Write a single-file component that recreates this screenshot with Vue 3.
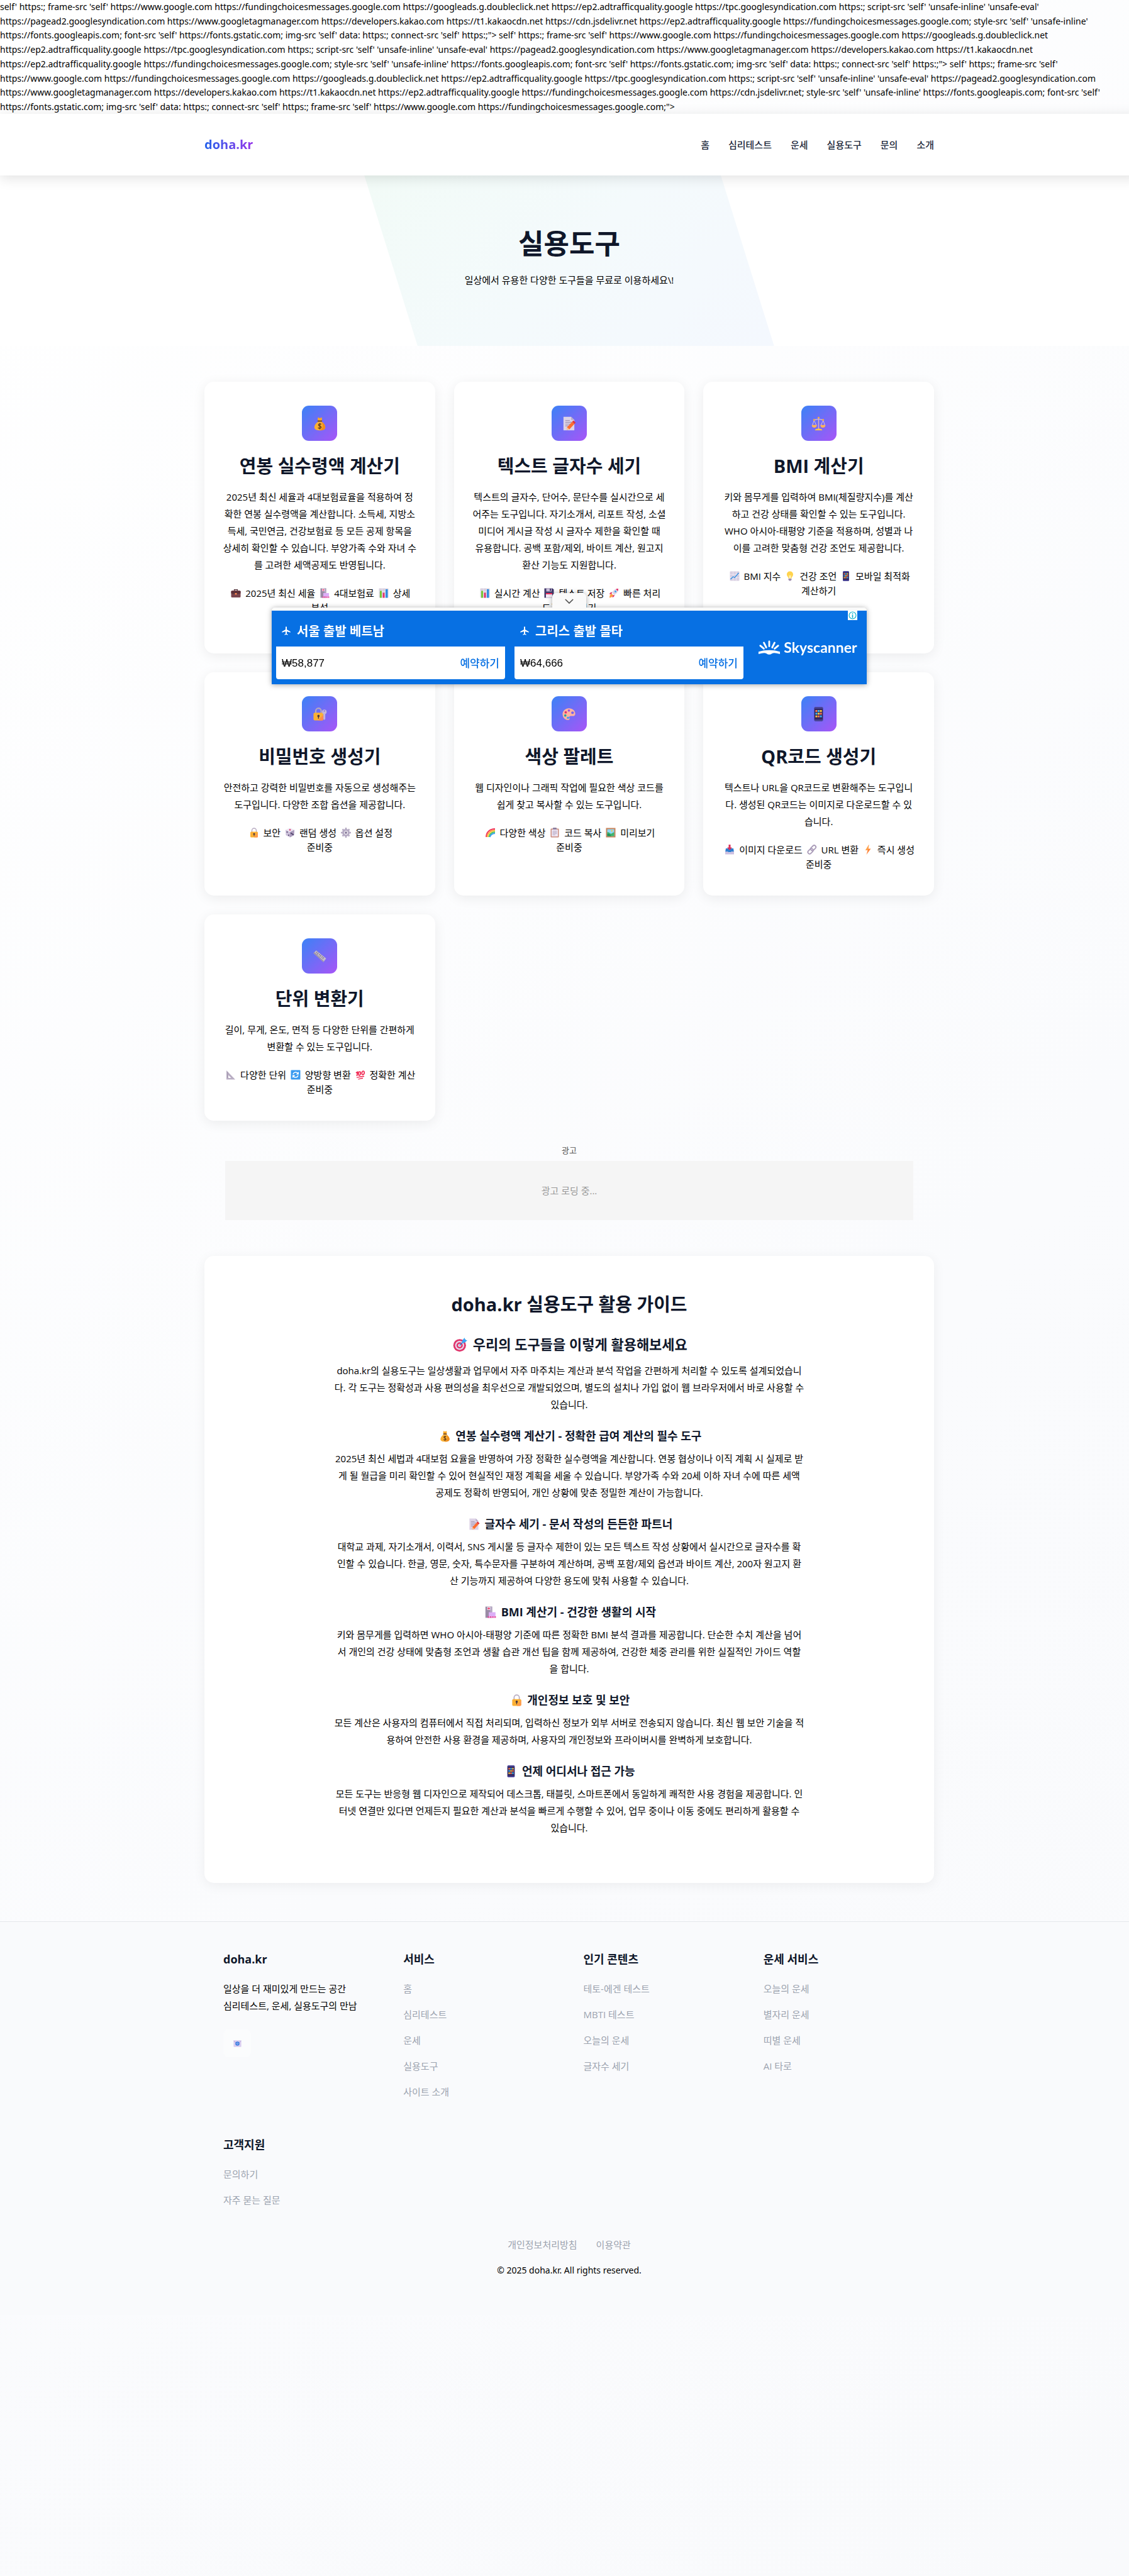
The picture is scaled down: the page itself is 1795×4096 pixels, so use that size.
<script setup>
import { h } from 'vue'

const icons = {
  money: '<path d="M12 2l4 2 4-2 1 5-2 3h-6l-2-3z" fill="#f9a825"/><rect x="11" y="9" width="10" height="3" rx="1" fill="#7a4a1d"/><path d="M12 12h8c5 3 8 8 8 12 0 5-4 7-12 7S4 29 4 24c0-4 3-9 8-12z" fill="#fbb034"/><path d="M20 12c5 3 8 8 8 12 0 5-4 7-12 7 6-3 8-12 4-19z" fill="#f08c1c"/><path d="M19 18c-1-2-6-2-6 1s6 2 6 5-5 3-7 1M16 15v14" fill="none" stroke="#6b3f18" stroke-width="2"/>',
  memo: '<path d="M4 1h17l7 7v23H4z" fill="#ddd3e6"/><path d="M21 1l7 7h-7z" fill="#b9a9c8"/><path d="M8 9h10M8 13h14M8 17h12M8 21h7" stroke="#9d8fae" stroke-width="1.6"/><path d="M11 30l1-6 11-12 5 5-11 12z" fill="#ff6d2e"/><path d="M23 12l3-3 5 5-3 3z" fill="#e0353c"/><path d="M11 30l1-6 5 5z" fill="#f7c9a0"/>',
  scales: '<path d="M15 2h2v26h-2z" fill="#d7b5c0"/><circle cx="16" cy="3" r="2" fill="#fbb034"/><path d="M6 8l10-2 10 2" fill="none" stroke="#c9b1d9" stroke-width="2"/><path d="M6 9L2 20M6 9l5 11M26 9l-5 11M26 9l4 11" stroke="#d9c4e8" stroke-width="1.3"/><circle cx="6" cy="8" r="2" fill="#fbb034"/><circle cx="26" cy="8" r="2" fill="#fbb034"/><path d="M1 19h11c0 4-2 6-5.500 6S1 23 1 19zM20 19h11c0 4-2 6-5.500 6S20 23 20 19z" fill="#fdb35a"/><path d="M8 31c0-3 3-4 8-4s8 1 8 4z" fill="#ffc83d"/>',
  lockkey: '<path d="M7 14V9a6 6 0 0 1 12 0v5" fill="none" stroke="#b7a8bd" stroke-width="3"/><rect x="2" y="13" width="22" height="17" rx="3" fill="#fbb034"/><path d="M12 30l12-13v10a3 3 0 0 1-3 3z" fill="#ff8a50"/><circle cx="13" cy="20" r="2.500" fill="#4a3540"/><path d="M12 20h2v6h-2z" fill="#4a3540"/><circle cx="26" cy="11" r="5" fill="#c3b5da"/><circle cx="26" cy="9" r="1.500" fill="#7a65f0"/><path d="M24 14h4v13l-2 2-2-2z" fill="#c3b5da"/>',
  palette: '<path d="M16 3C8 3 2 9 2 16s5 13 12 13c4 0 4-3 3-5s0-4 3-4c4 0 10 2 10-5C30 8 24 3 16 3z" fill="#ffb3a0"/><circle cx="9" cy="12" r="2.600" fill="#e0356c"/><circle cx="16" cy="8" r="2.600" fill="#a04de0"/><circle cx="8" cy="19" r="2.600" fill="#20a6a0"/><circle cx="14" cy="24" r="2.600" fill="#3aa0f0"/><circle cx="24" cy="13" r="3" fill="#7661f2"/>',
  phone: '<rect x="6" y="0" width="20" height="32" rx="3" fill="#4a4596"/><rect x="7" y="4" width="18" height="24" fill="#33265c"/><path d="M9 7h4v4H9zM19 13h4v4h-4zM14 19h4v4h-4z" fill="#ff7a4a"/><path d="M14 7h4v4h-4zM9 13h4v4H9zM19 19h4v4h-4z" fill="#38b8f2"/><path d="M19 7h4v4h-4zM14 13h4v4h-4zM9 19h4v4H9z" fill="#ffc83d"/>',
  ruler: '<path d="M2 9l6-6 22 18-6 8z" fill="#c4bccb"/><path d="M2 9l22 20 1-2L4 7z" fill="#9d93a6"/><path d="M10 6l-2 3M13 8l-3 4M16 11l-2 3M19 13l-3 4M22 16l-2 3M25 18l-3 4" stroke="#7a6f86" stroke-width="1.400"/>',
  briefcase: '<path d="M11 9V5h10v4" fill="none" stroke="#4d2a32" stroke-width="2.500"/><rect x="1" y="8" width="30" height="22" rx="3" fill="#7a444c"/><path d="M1 10h30v7l-15 3-15-3z" fill="#5c3038"/><rect x="13" y="16" width="6" height="5" rx="1" fill="#ff8a50"/>',
  hospital: '<path d="M3 1h18v30H3z" fill="#9a8ba6"/><path d="M15 1h6v14h-6z" fill="#b6a8c4"/><path d="M8 2h8v8H8z" fill="#f5e6f4"/><path d="M12 3v6M9 6h6" stroke="#f02f5c" stroke-width="2"/><path d="M12 16h18v11H12z" fill="#dcaef7"/><path d="M9 27h22v4H9z" fill="#e3499f"/><path d="M14 27v4M20 27v4M26 27v4" stroke="#f7c6ea" stroke-width="2"/>',
  bars: '<rect x="1" y="1" width="30" height="30" rx="2" fill="#d8d0df"/><path d="M1 11h30M1 21h30M11 1v30M21 1v30" stroke="#f3eef7" stroke-width="1"/><path d="M4 9h6v22H4z" fill="#74c837"/><path d="M13 15h6v16h-6z" fill="#e0356c"/><path d="M22 4h7v27h-7z" fill="#2f8ee0"/>',
  floppy: '<path d="M1 1h26l4 4v26H1z" fill="#433b6b"/><path d="M7 1h17v10H7z" fill="#c6bbd6"/><path d="M18 2h4v7h-4z" fill="#433b6b"/><path d="M6 16h20v15H6z" fill="#f3eaf5"/><path d="M6 16h20v4H6z" fill="#f02f5c"/>',
  rocket: '<path d="M30 2c-9 0-15 4-20 12l7 8c9-5 13-11 13-20z" fill="#dcd3e6"/><path d="M30 2c-3 0-6 .500-8 1.500l6.500 6.500c1-2 1.500-5 1.500-8z" fill="#e0356c"/><circle cx="21" cy="11" r="3" fill="#3aa0f0"/><path d="M10 13c-5 0-7 3-8 7l7-1zM18 22c0 5-3 7-7 8l1-7z" fill="#e0356c"/><path d="M9 18c-5 2-7 6-7 13 6-1 10-3 12-8z" fill="#ff9b45"/>',
  trend: '<rect x="1" y="1" width="30" height="30" rx="2" fill="#d8cfe2"/><path d="M1 11h30M1 21h30M11 1v30M21 1v30" stroke="#f5f0fa" stroke-width="1.200"/><path d="M3 26l8-8 5 3L29 6" fill="none" stroke="#2f8ee0" stroke-width="2.600"/>',
  bulb: '<path d="M16 1c-6 0-10 4-10 10 0 5 4 7 5 12h10c1-5 5-7 5-12 0-6-4-10-10-10z" fill="#ffd34d"/><path d="M13 12l3 3 3-3v11h-6z" fill="#fff1b3"/><path d="M11 24h10v4l-3 3h-4l-3-3z" fill="#a08fae"/>',
  lock: '<path d="M9 15V9a7 7 0 0 1 14 0v6" fill="none" stroke="#b9adc2" stroke-width="3"/><rect x="4" y="13" width="24" height="18" rx="3" fill="#fbb034"/><path d="M16 31L28 15v13a3 3 0 0 1-3 3z" fill="#ff9a4d"/><circle cx="16" cy="20" r="3" fill="#4a3540"/><path d="M15 21h2v6h-2z" fill="#4a3540"/>',
  dice: '<path d="M16 1l14 6-14 7L2 7z" fill="#ece5f2"/><path d="M2 7l14 7v17L3 24z" fill="#cbbfd8"/><path d="M30 7l-14 7v17l13-7z" fill="#a99abb"/><circle cx="16" cy="7" r="2.500" fill="#e0356c"/><circle cx="7" cy="14" r="2" fill="#483a63"/><circle cx="12" cy="24" r="2" fill="#483a63"/><circle cx="20" cy="18" r="2" fill="#483a63"/><circle cx="26" cy="22" r="2" fill="#483a63"/><circle cx="23" cy="20" r="2" fill="#483a63"/>',
  gear: '<circle cx="16" cy="16" r="9" fill="none" stroke="#b6abc4" stroke-width="6"/><path d="M16 0v6M16 26v6M0 16h6M26 16h6M5 5l4 4M23 23l4 4M27 5l-4 4M9 23l-4 4" stroke="#b6abc4" stroke-width="5"/><circle cx="16" cy="16" r="4" fill="#8d80a0"/>',
  rainbow: '<g fill="none" stroke-width="3.600"><path d="M2 30C2 14 14 4 30 4" stroke="#f02f5c"/><path d="M5 30C5 17 16 8 30 8" stroke="#ff9b45"/><path d="M8 30C9 19 18 12 30 11" stroke="#ffd34d"/><path d="M11 30c1-9 8-15 19-16" stroke="#4bc46a"/><path d="M14 30c1-7 7-11 16-12" stroke="#3aa0f0"/></g>',
  clipboard: '<rect x="3" y="3" width="26" height="28" rx="2" fill="#c98a7d"/><path d="M6 6h20v22H6z" fill="#efe7f4"/><rect x="10" y="0" width="12" height="6" rx="2" fill="#8d80a0"/><path d="M9 11h14M9 15h14M9 19h14M9 23h9" stroke="#a497b5" stroke-width="1.600"/>',
  picture: '<rect x="1" y="1" width="30" height="30" fill="#c9835a"/><path d="M5 5h22v22H5z" fill="#8fd6f7"/><path d="M5 14c7-1 9 7 13 5s6-5 9-4v12H5z" fill="#3fb56c"/><path d="M5 19c6 0 10 3 13 8H5z" fill="#22905a"/><path d="M17 7l6 2-4 5z" fill="#ffc83d"/>',
  inbox: '<path d="M4 12h24l2 12H2z" fill="#2f7fd0"/><path d="M2 22h9c1 4 9 4 10 0h9v9H2z" fill="#cbbfe0"/><path d="M13 0h6v9h5l-8 9-8-9h5z" fill="#d92f5c"/>',
  link: '<g fill="none" stroke="#a99bb8" stroke-width="3.600"><rect x="15" y="1" width="11" height="19" rx="5.500" transform="rotate(45 20 10)"/><rect x="6" y="12" width="11" height="19" rx="5.500" transform="rotate(45 12 21)"/></g>',
  bolt: '<path d="M19 0L8 18h7l-4 14 14-19h-8z" fill="#ff8438"/><path d="M19 0L8 18h7l2-5z" fill="#ffa64d"/>',
  triangle: '<path d="M2 2l28 29H2z" fill="#b9aec4"/><path d="M8 17l9 9H8z" fill="#fff"/><path d="M4 8h3M4 12h3M4 16h3M4 20h3M4 24h3" stroke="#84788f" stroke-width="1.200"/>',
  refresh: '<rect x="1" y="1" width="30" height="30" rx="2" fill="#3a9af0"/><path d="M8 14c2-7 11-8 15-3M24 18c-2 7-11 8-15 3" fill="none" stroke="#fff" stroke-width="3"/><path d="M26 6v9h-9zM6 26v-9h9z" fill="#fff"/>',
  hundred: '<g fill="none" stroke="#f0244f" stroke-width="3.400" stroke-linecap="round"><path d="M3 9l4-2-2 12M10 16c-1-6 1-10 4-10s3 4 2 8-5 5-6 2zM21 14c-1-6 1-10 4-10s4 4 3 8-6 5-7 2z"/><path d="M5 25c8-3 15-4 22-4M10 30c5-2 9-3 13-3" stroke-width="2.600"/></g>',
  target: '<circle cx="15" cy="17" r="14" fill="#e0356c"/><circle cx="15" cy="17" r="10" fill="#e6dcef"/><circle cx="15" cy="17" r="7" fill="#e0356c"/><circle cx="15" cy="17" r="3.500" fill="#e6dcef"/><path d="M15 17L28 4" stroke="#2f7fd0" stroke-width="2"/><path d="M20 12l1-6 5-6 1 5 5 1-6 5z" fill="#3aa6f5"/>',
  mail: '<rect x="1" y="3" width="30" height="26" rx="2" fill="#d9cdf0"/><path d="M1 5l15 12L31 5" fill="none" stroke="#b3a3d6" stroke-width="2"/><circle cx="16" cy="16" r="8" fill="#3a7be0"/><circle cx="16" cy="16" r="3" fill="none" stroke="#cfe0fb" stroke-width="1.600"/>',
}

const Ico = (props) =>
  h('svg', { viewBox: '0 0 32 32', 'aria-hidden': 'true', innerHTML: icons[props.name] })
Ico.props = ['name']

const policyLines = [
  "self' https:; frame-src 'self' https://www.google.com https://fundingchoicesmessages.google.com https://googleads.g.doubleclick.net https://ep2.adtrafficquality.google https://tpc.googlesyndication.com https:; script-src 'self' 'unsafe-inline' 'unsafe-eval'",
  "https://pagead2.googlesyndication.com https://www.googletagmanager.com https://developers.kakao.com https://t1.kakaocdn.net https://cdn.jsdelivr.net https://ep2.adtrafficquality.google https://fundingchoicesmessages.google.com; style-src 'self' 'unsafe-inline'",
  "https://fonts.googleapis.com; font-src 'self' https://fonts.gstatic.com; img-src 'self' data: https:; connect-src 'self' https:;\"> self' https:; frame-src 'self' https://www.google.com https://fundingchoicesmessages.google.com https://googleads.g.doubleclick.net",
  "https://ep2.adtrafficquality.google https://tpc.googlesyndication.com https:; script-src 'self' 'unsafe-inline' 'unsafe-eval' https://pagead2.googlesyndication.com https://www.googletagmanager.com https://developers.kakao.com https://t1.kakaocdn.net",
  "https://ep2.adtrafficquality.google https://fundingchoicesmessages.google.com; style-src 'self' 'unsafe-inline' https://fonts.googleapis.com; font-src 'self' https://fonts.gstatic.com; img-src 'self' data: https:; connect-src 'self' https:;\"> self' https:; frame-src 'self'",
  "https://www.google.com https://fundingchoicesmessages.google.com https://googleads.g.doubleclick.net https://ep2.adtrafficquality.google https://tpc.googlesyndication.com https:; script-src 'self' 'unsafe-inline' 'unsafe-eval' https://pagead2.googlesyndication.com",
  "https://www.googletagmanager.com https://developers.kakao.com https://t1.kakaocdn.net https://ep2.adtrafficquality.google https://fundingchoicesmessages.google.com https://cdn.jsdelivr.net; style-src 'self' 'unsafe-inline' https://fonts.googleapis.com; font-src 'self'",
  "https://fonts.gstatic.com; img-src 'self' data: https:; connect-src 'self' https:; frame-src 'self' https://www.google.com https://fundingchoicesmessages.google.com;\">",
]

const nav = ['홈', '심리테스트', '운세', '실용도구', '문의', '소개']

const tools = [
  {
    icon: 'money', title: '연봉 실수령액 계산기', action: '계산하기',
    text: '2025년 최신 세율과 4대보험료율을 적용하여 정\n확한 연봉 실수령액을 계산합니다. 소득세, 지방소\n득세, 국민연금, 건강보험료 등 모든 공제 항목을\n상세히 확인할 수 있습니다. 부양가족 수와 자녀 수\n를 고려한 세액공제도 반영됩니다.',
    features: [['briefcase', '2025년 최신 세율'], ['hospital', '4대보험료'], ['bars', '상세\n분석']],
  },
  {
    icon: 'memo', title: '텍스트 글자수 세기', action: '도구 사용하기',
    text: '텍스트의 글자수, 단어수, 문단수를 실시간으로 세\n어주는 도구입니다. 자기소개서, 리포트 작성, 소셜\n미디어 게시글 작성 시 글자수 제한을 확인할 때\n유용합니다. 공백 포함/제외, 바이트 계산, 원고지\n환산 기능도 지원합니다.',
    features: [['bars', '실시간 계산'], ['floppy', '텍스트 저장'], ['rocket', '빠른 처리']],
  },
  {
    icon: 'scales', title: 'BMI 계산기', action: '계산하기',
    text: '키와 몸무게를 입력하여 BMI(체질량지수)를 계산\n하고 건강 상태를 확인할 수 있는 도구입니다.\nWHO 아시아-태평양 기준을 적용하며, 성별과 나\n이를 고려한 맞춤형 건강 조언도 제공합니다.',
    features: [['trend', 'BMI 지수'], ['bulb', '건강 조언'], ['phone', '모바일 최적화']],
  },
  {
    icon: 'lockkey', title: '비밀번호 생성기', action: '준비중',
    text: '안전하고 강력한 비밀번호를 자동으로 생성해주는\n도구입니다. 다양한 조합 옵션을 제공합니다.',
    features: [['lock', '보안'], ['dice', '랜덤 생성'], ['gear', '옵션 설정']],
  },
  {
    icon: 'palette', title: '색상 팔레트', action: '준비중',
    text: '웹 디자인이나 그래픽 작업에 필요한 색상 코드를\n쉽게 찾고 복사할 수 있는 도구입니다.',
    features: [['rainbow', '다양한 색상'], ['clipboard', '코드 복사'], ['picture', '미리보기']],
  },
  {
    icon: 'phone', title: 'QR코드 생성기', action: '준비중',
    text: '텍스트나 URL을 QR코드로 변환해주는 도구입니\n다. 생성된 QR코드는 이미지로 다운로드할 수 있\n습니다.',
    features: [['inbox', '이미지 다운로드'], ['link', 'URL 변환'], ['bolt', '즉시 생성']],
  },
  {
    icon: 'ruler', title: '단위 변환기', action: '준비중',
    text: '길이, 무게, 온도, 면적 등 다양한 단위를 간편하게\n변환할 수 있는 도구입니다.',
    features: [['triangle', '다양한 단위'], ['refresh', '양방향 변환'], ['hundred', '정확한 계산']],
  },
]

const deals = [
  { route: '서울 출발 베트남', price: '₩58,877' },
  { route: '그리스 출발 몰타', price: '₩64,666' },
]

const guide = [
  { icon: 'money', title: '연봉 실수령액 계산기 - 정확한 급여 계산의 필수 도구', text: '2025년 최신 세법과 4대보험 요율을 반영하여 가장 정확한 실수령액을 계산합니다. 연봉 협상이나 이직 계획 시 실제로 받\n게 될 월급을 미리 확인할 수 있어 현실적인 재정 계획을 세울 수 있습니다. 부양가족 수와 20세 이하 자녀 수에 따른 세액\n공제도 정확히 반영되어, 개인 상황에 맞춘 정밀한 계산이 가능합니다.' },
  { icon: 'memo', title: '글자수 세기 - 문서 작성의 든든한 파트너', text: '대학교 과제, 자기소개서, 이력서, SNS 게시물 등 글자수 제한이 있는 모든 텍스트 작성 상황에서 실시간으로 글자수를 확\n인할 수 있습니다. 한글, 영문, 숫자, 특수문자를 구분하여 계산하며, 공백 포함/제외 옵션과 바이트 계산, 200자 원고지 환\n산 기능까지 제공하여 다양한 용도에 맞춰 사용할 수 있습니다.' },
  { icon: 'hospital', title: 'BMI 계산기 - 건강한 생활의 시작', text: '키와 몸무게를 입력하면 WHO 아시아-태평양 기준에 따른 정확한 BMI 분석 결과를 제공합니다. 단순한 수치 계산을 넘어\n서 개인의 건강 상태에 맞춤형 조언과 생활 습관 개선 팁을 함께 제공하여, 건강한 체중 관리를 위한 실질적인 가이드 역할\n을 합니다.' },
  { icon: 'lock', title: '개인정보 보호 및 보안', text: '모든 계산은 사용자의 컴퓨터에서 직접 처리되며, 입력하신 정보가 외부 서버로 전송되지 않습니다. 최신 웹 보안 기술을 적\n용하여 안전한 사용 환경을 제공하며, 사용자의 개인정보와 프라이버시를 완벽하게 보호합니다.' },
  { icon: 'phone', title: '언제 어디서나 접근 가능', text: '모든 도구는 반응형 웹 디자인으로 제작되어 데스크톱, 태블릿, 스마트폰에서 동일하게 쾌적한 사용 경험을 제공합니다. 인\n터넷 연결만 있다면 언제든지 필요한 계산과 분석을 빠르게 수행할 수 있어, 업무 중이나 이동 중에도 편리하게 활용할 수\n있습니다.' },
]

const footerColumns = [
  { title: '서비스', links: ['홈', '심리테스트', '운세', '실용도구', '사이트 소개'] },
  { title: '인기 콘텐츠', links: ['테토-에겐 테스트', 'MBTI 테스트', '오늘의 운세', '글자수 세기'] },
  { title: '운세 서비스', links: ['오늘의 운세', '별자리 운세', '띠별 운세', 'AI 타로'] },
  { title: '고객지원', links: ['문의하기', '자주 묻는 질문'] },
]
</script>

<template>
  <div class="viewport">
    <div class="page">
      <div class="policy">
        <div v-for="line in policyLines" :key="line">{{ line }}</div>
      </div>

      <header class="header">
        <div class="container header-row">
          <a href="#" class="logo">doha.kr</a>
          <nav class="nav">
            <a v-for="item in nav" :key="item" href="#">{{ item }}</a>
          </nav>
        </div>
      </header>

      <section class="hero">
        <h1>실용도구</h1>
        <p>일상에서 유용한 다양한 도구들을 무료로 이용하세요\!</p>
      </section>

      <main class="container">
        <div class="tools">
          <article v-for="tool in tools" :key="tool.title" class="card">
            <div class="tile"><Ico :name="tool.icon" class="tile-icon" /></div>
            <h2>{{ tool.title }}</h2>
            <p class="card-text">{{ tool.text }}</p>
            <div class="features">
              <template v-for="f in tool.features" :key="f[1]"><Ico :name="f[0]" class="emoji" />{{ ' ' + f[1] + ' ' }}</template>
            </div>
            <a href="#" class="action">{{ tool.action }}</a>
          </article>
        </div>

        <div class="ad-slot">
          <div class="ad-label">광고</div>
          <div class="ad-box">광고 로딩 중...</div>
        </div>

        <section class="guide">
          <h2>doha.kr 실용도구 활용 가이드</h2>
          <h3><Ico name="target" class="emoji-lg" /> 우리의 도구들을 이렇게 활용해보세요</h3>
          <p>doha.kr의 실용도구는 일상생활과 업무에서 자주 마주치는 계산과 분석 작업을 간편하게 처리할 수 있도록 설계되었습니<br>다. 각 도구는 정확성과 사용 편의성을 최우선으로 개발되었으며, 별도의 설치나 가입 없이 웹 브라우저에서 바로 사용할 수<br>있습니다.</p>
          <template v-for="g in guide" :key="g.title">
            <h4><Ico :name="g.icon" class="emoji-md" />{{ ' ' + g.title }}</h4>
            <p>{{ g.text }}</p>
          </template>
        </section>
      </main>

      <footer class="footer">
        <div class="footer-grid">
          <div>
            <h3>doha.kr</h3>
            <p class="about">일상을 더 재미있게 만드는 공간<br>심리테스트, 운세, 실용도구의 만남</p>
            <a href="#" class="mail" aria-label="이메일"><Ico name="mail" class="mail-icon" /></a>
          </div>
          <div v-for="col in footerColumns" :key="col.title">
            <h3>{{ col.title }}</h3>
            <ul>
              <li v-for="link in col.links" :key="link"><a href="#">{{ link }}</a></li>
            </ul>
          </div>
        </div>
        <div class="legal">
          <a href="#">개인정보처리방침</a>
          <a href="#">이용약관</a>
        </div>
        <p class="copyright">© 2025 doha.kr. All rights reserved.</p>
      </footer>

      <aside class="anchor-ad">
        <button class="collapse" type="button" aria-label="광고 접기">
          <svg viewBox="0 0 16 10"><path d="M1 1l7 7 7-7" fill="none" stroke="#555" stroke-width="2" /></svg>
        </button>
        <div class="strip"></div>
        <div class="banner">
          <div v-for="deal in deals" :key="deal.route" class="deal">
            <div class="route">
              <svg viewBox="0 0 24 24"><path d="M22 16v-2l-8.500-5V3.500a1.500 1.500 0 0 0-3 0V9L2 14v2l8.500-2.500V19L8 20.500V22l4-1 4 1v-1.500L13.500 19v-5.500z" fill="#fff" /></svg>
              <span>{{ deal.route }}</span>
            </div>
            <div class="offer">
              <span class="price">{{ deal.price }}</span>
              <a href="#">예약하기</a>
            </div>
          </div>
          <div class="brand">
            <svg viewBox="0 0 38 24">
              <path d="M1 19q18-5 36 0v4q-10-3-13-1t-5 2-5-2-13 1z" fill="#fff" />
              <g stroke="#fff" stroke-width="3" stroke-linecap="round"><path d="M19 2v8M10 4l4 8M28 4l-4 8M4 9l6 5M34 9l-6 5" /></g>
            </svg>
            <span>Skyscanner</span>
          </div>
          <button class="info" type="button" aria-label="광고 정보">
            <svg viewBox="0 0 15 15"><circle cx="7.500" cy="7.500" r="5.500" fill="none" stroke="#00aecd" stroke-width="1.200" /><path d="M7.500 6.500v5M7.500 4v1.500" stroke="#00aecd" stroke-width="1.600" /></svg>
          </button>
        </div>
      </aside>
    </div>
  </div>
</template>

<style>
body {
  background: linear-gradient(135deg, #ffffff 0%, #fafbfd 60%, #f9fafc 100%);
}
</style>

<style scoped>
.viewport {
  overflow: hidden;
  min-height: 100vh;
  font-family: "Open Sans", "Noto Sans CJK KR", sans-serif;
  font-size: 15px;
  line-height: 23px;
  color: #000;
}
.page {
  position: relative;
  width: calc(100% + 15px);
}
a {
  color: inherit;
  text-decoration: none;
}
h1, h2, h3, h4, p, ul {
  margin: 0;
  padding: 0;
}
h1, h2, h3, h4 {
  color: #0f172a;
  font-weight: 700;
}
.container {
  max-width: 1160px;
  margin: 0 auto;
}

.policy {
  display: flex;
  flex-direction: column;
  justify-content: space-between;
  height: 181px;
  font-family: "Noto Sans", sans-serif;
  font-size: 14px;
  line-height: 22px;
  white-space: nowrap;
}

.header {
  position: relative;
  z-index: 2;
  background: #fff;
  box-shadow: 0 4px 20px rgba(0, 0, 0, 0.12);
}
.header-row {
  display: flex;
  align-items: center;
  justify-content: space-between;
  height: 98px;
}
.logo {
  font-size: 20px;
  line-height: 32px;
  font-weight: 700;
  background: linear-gradient(90deg, #2563eb, #9333ea);
  -webkit-background-clip: text;
  background-clip: text;
  color: transparent;
}
.nav {
  display: flex;
  gap: 30px;
  font-weight: 500;
  color: #1e293b;
}

.hero {
  position: relative;
  box-sizing: border-box;
  height: 271px;
  padding-top: 81px;
  background: #fff;
  text-align: center;
}
.hero::before {
  content: "";
  position: absolute;
  top: 0;
  bottom: 0;
  left: 32%;
  width: 36%;
  background: linear-gradient(135deg, #f2fbf7, #f4fafc 50%, #f4f8fe);
  clip-path: polygon(0 0, 87% 0, 100% 100%, 13% 100%);
}
.hero h1 {
  position: relative;
  font-size: 44px;
  line-height: 54px;
}
.hero p {
  position: relative;
  margin-top: 20px;
}

.tools {
  display: grid;
  grid-template-columns: repeat(3, 1fr);
  gap: 30px;
  margin-top: 57px;
}
.card {
  padding: 38px 20px;
  border-radius: 15px;
  background: #fff;
  box-shadow: 0 4px 20px rgba(0, 0, 0, 0.07);
  text-align: center;
}
.tile {
  display: flex;
  align-items: center;
  justify-content: center;
  width: 56px;
  height: 56px;
  margin: 0 auto 22px;
  border-radius: 11px;
  background: linear-gradient(135deg, #3b82f6, #a855f7);
}
.tile-icon {
  width: 23px;
  height: 23px;
}
.card h2 {
  margin-bottom: 19px;
  font-size: 29px;
  line-height: 35px;
}
.card-text {
  margin-bottom: 20px;
  line-height: 27px;
  white-space: pre-line;
}
.features {
  white-space: pre-line;
}
.action {
  display: block;
}
.emoji {
  width: 16px;
  height: 16px;
  margin: 0 3px;
  vertical-align: -2px;
}
.emoji-md {
  width: 19px;
  height: 19px;
  margin: 0 3px;
  vertical-align: -3px;
}
.emoji-lg {
  width: 23px;
  height: 23px;
  margin: 0 3px;
  vertical-align: -4px;
}

.ad-slot {
  padding: 37px 33px 57px;
  text-align: center;
}
.ad-label {
  margin-bottom: 7px;
  font-size: 13px;
  line-height: 20px;
  color: #555;
}
.ad-box {
  display: flex;
  align-items: center;
  justify-content: center;
  height: 94px;
  background: #f5f5f5;
  color: #999;
}

.guide {
  padding: 59px 30px 74px;
  border-radius: 15px;
  background: #fff;
  box-shadow: 0 4px 20px rgba(0, 0, 0, 0.06);
  text-align: center;
}
.guide h2 {
  margin-bottom: 32px;
  font-size: 29px;
  line-height: 36px;
}
.guide h3 {
  margin-bottom: 15px;
  font-size: 22px;
  line-height: 27px;
}
.guide h4 {
  margin: 25px 0 12px;
  font-size: 18px;
  line-height: 22px;
}
.guide p {
  line-height: 27px;
  white-space: pre-line;
}

.footer {
  margin-top: 61px;
  padding: 48px 0 60px;
  border-top: 1px solid #e5e7eb;
  background: #f9fafc;
}
.footer-grid {
  display: grid;
  grid-template-columns: repeat(4, 1fr);
  gap: 45px;
  max-width: 1100px;
  margin: 0 auto;
}
.footer h3 {
  margin-bottom: 23px;
  font-size: 18px;
  line-height: 22px;
}
.footer ul {
  list-style: none;
}
.footer li {
  margin-bottom: 14px;
  line-height: 27px;
}
.footer li a, .legal a {
  color: #9ca3af;
}
.about {
  line-height: 27px;
}
.mail {
  display: flex;
  align-items: center;
  justify-content: center;
  width: 44px;
  height: 44px;
  margin-top: 24px;
  border-radius: 8px;
  background: #fbfcfd;
}
.mail-icon {
  width: 15px;
  height: 13px;
}
.legal {
  display: flex;
  justify-content: center;
  gap: 30px;
  margin-top: 30px;
  line-height: 27px;
}
.copyright {
  margin-top: 15px;
  font-family: "Noto Sans", sans-serif;
  font-size: 14px;
  text-align: center;
}

.anchor-ad {
  position: absolute;
  z-index: 5;
  top: 943px;
  left: 0;
  right: 0;
  width: 946px;
  margin: 0 auto;
  filter: drop-shadow(0 1px 4px rgba(0, 0, 0, 0.35));
}
.collapse {
  display: flex;
  align-items: center;
  justify-content: center;
  width: 54px;
  height: 23px;
  margin: 0 auto;
  padding: 4px 0 0;
  border: 0;
  border-radius: 6px 6px 0 0;
  background: #fafafa;
}
.collapse svg {
  width: 14px;
  height: 9px;
}
.strip {
  height: 5px;
  border-radius: 5px 5px 0 0;
  background: #fafafa;
}
.banner {
  position: relative;
  display: flex;
  gap: 15px;
  padding: 7px 7px 8px;
  background: #0770e3;
}
.deal {
  flex: 0 0 364px;
}
.route {
  display: flex;
  align-items: center;
  gap: 9px;
  height: 50px;
  padding: 0 8px;
  font-size: 20px;
  font-weight: 600;
  color: #fff;
}
.route svg {
  width: 16px;
  height: 18px;
}
.offer {
  display: flex;
  align-items: center;
  justify-content: space-between;
  height: 52px;
  padding: 0 9px;
  border-radius: 0 0 4px 4px;
  background: #fff;
}
.price {
  font-family: "Liberation Sans", "Noto Sans CJK KR", sans-serif;
  font-size: 17px;
}
.offer a {
  font-size: 17px;
  font-weight: 500;
  color: #0770e3;
}
.brand {
  display: flex;
  align-items: center;
  justify-content: center;
  gap: 5px;
  flex: 1;
  font-family: Lato, sans-serif;
  font-size: 23px;
  font-weight: 700;
  color: #fff;
}
.brand svg {
  width: 36px;
  height: 23px;
}
.info {
  position: absolute;
  top: 0;
  right: 15px;
  width: 15px;
  height: 15px;
  padding: 0;
  border: 0;
  background: #fff;
}
.info svg {
  display: block;
  width: 15px;
  height: 15px;
}
</style>
